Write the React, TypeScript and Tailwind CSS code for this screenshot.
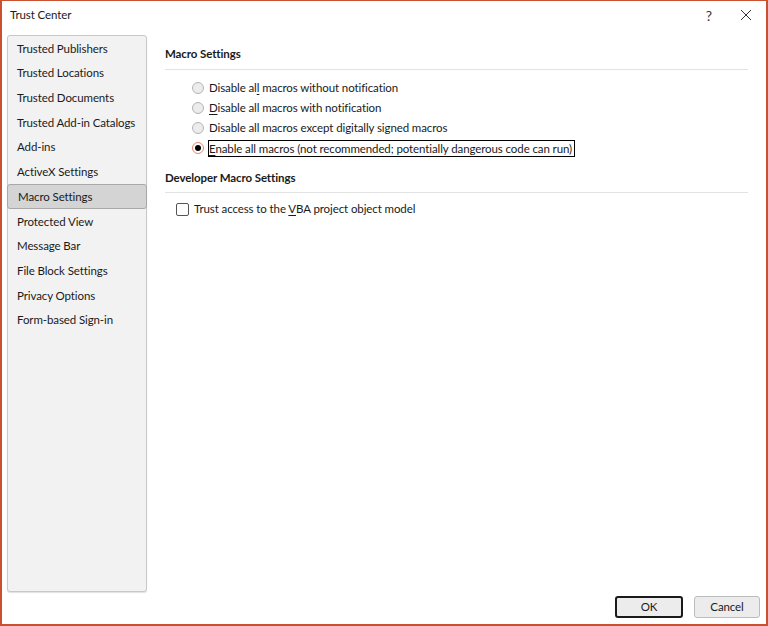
import React from "react";

const navItems = [
  "Trusted Publishers",
  "Trusted Locations",
  "Trusted Documents",
  "Trusted Add-in Catalogs",
  "Add-ins",
  "ActiveX Settings",
  "Macro Settings",
  "Protected View",
  "Message Bar",
  "File Block Settings",
  "Privacy Options",
  "Form-based Sign-in",
];

function Radio({ checked }: { checked?: boolean }) {
  return (
    <span
      className={`flex h-[12px] w-[12px] shrink-0 items-center justify-center rounded-full border ${
        checked ? "border-[#e0866f] bg-white" : "border-[#b4b4b4] bg-[#ececec]"
      }`}
    >
      {checked && <span className="h-[6px] w-[6px] rounded-full bg-black" />}
    </span>
  );
}

function Label({ text, ul }: { text: string; ul: number }) {
  return (
    <>
      {text.slice(0, ul)}
      <span className="underline underline-offset-2">{text[ul]}</span>
      {text.slice(ul + 1)}
    </>
  );
}

export default function App() {
  const selected = "Macro Settings";

  return (
    <div
      className="flex h-[626px] w-[768px] flex-col border-x-2 border-b-2 border-t border-[#c9512f] bg-white text-[11.5px] tracking-[-0.1px] text-[#1a1a1a] whitespace-nowrap"
      style={{ fontFamily: '"Segoe UI", Lato, "Noto Sans", sans-serif' }}
    >
      {/* title bar */}
      <div className="flex h-[28px] shrink-0 items-center justify-between pl-[8px] pr-[14px]">
        <span>Trust Center</span>
        <div className="flex items-center gap-[28px] text-[#333]">
          <span className="text-[14px]">?</span>
          <svg width="12" height="12" viewBox="0 0 12 12" className="stroke-[#333]">
            <path d="M1 1 L11 11 M11 1 L1 11" strokeWidth="1" fill="none" />
          </svg>
        </div>
      </div>

      <div className="flex min-h-0 flex-1 gap-[18px] pl-[5px] pr-[18px] pt-[6px]">
        {/* sidebar */}
        <div className="flex h-[557px] w-[140px] shrink-0 flex-col rounded-[3px] border border-[#c8c8c8] bg-[#f2f2f2] shadow-[0_1px_1px_rgba(0,0,0,0.12)]">
          {navItems.map((item) => (
            <div
              key={item}
              className={`flex h-[24.7px] items-center ${
                item === selected
                  ? "-mx-[1px] rounded-[3px] border border-[#a8a8a8] bg-[#d4d4d4] pl-[10px]"
                  : "pl-[9px]"
              }`}
            >
              {item}
            </div>
          ))}
        </div>

        {/* content */}
        <div className="flex min-w-0 flex-1 flex-col pt-[10px]">
          <div className="flex h-[18px] items-center font-bold">Macro Settings</div>
          <div className="mt-[6px] h-px bg-[#e3e3e3]" />
          <div className="flex flex-col pl-[27px] pt-[8px]">
            <div className="flex h-[20px] items-center gap-[4px]">
              <Radio />
              <span className="px-[1px]">
                <Label text="Disable all macros without notification" ul={10} />
              </span>
            </div>
            <div className="flex h-[20px] items-center gap-[4px]">
              <Radio />
              <span className="px-[1px]">
                <Label text="Disable all macros with notification" ul={0} />
              </span>
            </div>
            <div className="flex h-[20px] items-center gap-[4px]">
              <Radio />
              <span className="px-[1px]">Disable all macros except digitally signed macros</span>
            </div>
            <div className="flex h-[20px] items-center gap-[4px]">
              <Radio checked />
              <span className="border border-black pr-[2px] leading-[15px]">
                <Label text="Enable all macros (not recommended; potentially dangerous code can run)" ul={0} />
              </span>
            </div>
          </div>

          <div className="mt-[11px] flex h-[18px] items-center font-bold">Developer Macro Settings</div>
          <div className="mt-[5px] h-px bg-[#e3e3e3]" />
          <div className="flex h-[32px] items-center gap-[5px] pl-[11px]">
            <span className="h-[13px] w-[13px] shrink-0 rounded-[2px] border border-[#555] bg-white" />
            <span>
              <Label text="Trust access to the VBA project object model" ul={20} />
            </span>
          </div>
        </div>
      </div>

      {/* footer */}
      <div className="flex h-[38px] shrink-0 items-start justify-end gap-[11px] pr-[6px] pt-[10px]">
        <button className="h-[22px] w-[68px] rounded-[3px] border-2 border-[#1a1a1a] bg-[#ececec]">OK</button>
        <button className="h-[22px] w-[66px] rounded-[3px] border border-[#bcbcbc] bg-[#ececec]">Cancel</button>
      </div>
    </div>
  );
}
